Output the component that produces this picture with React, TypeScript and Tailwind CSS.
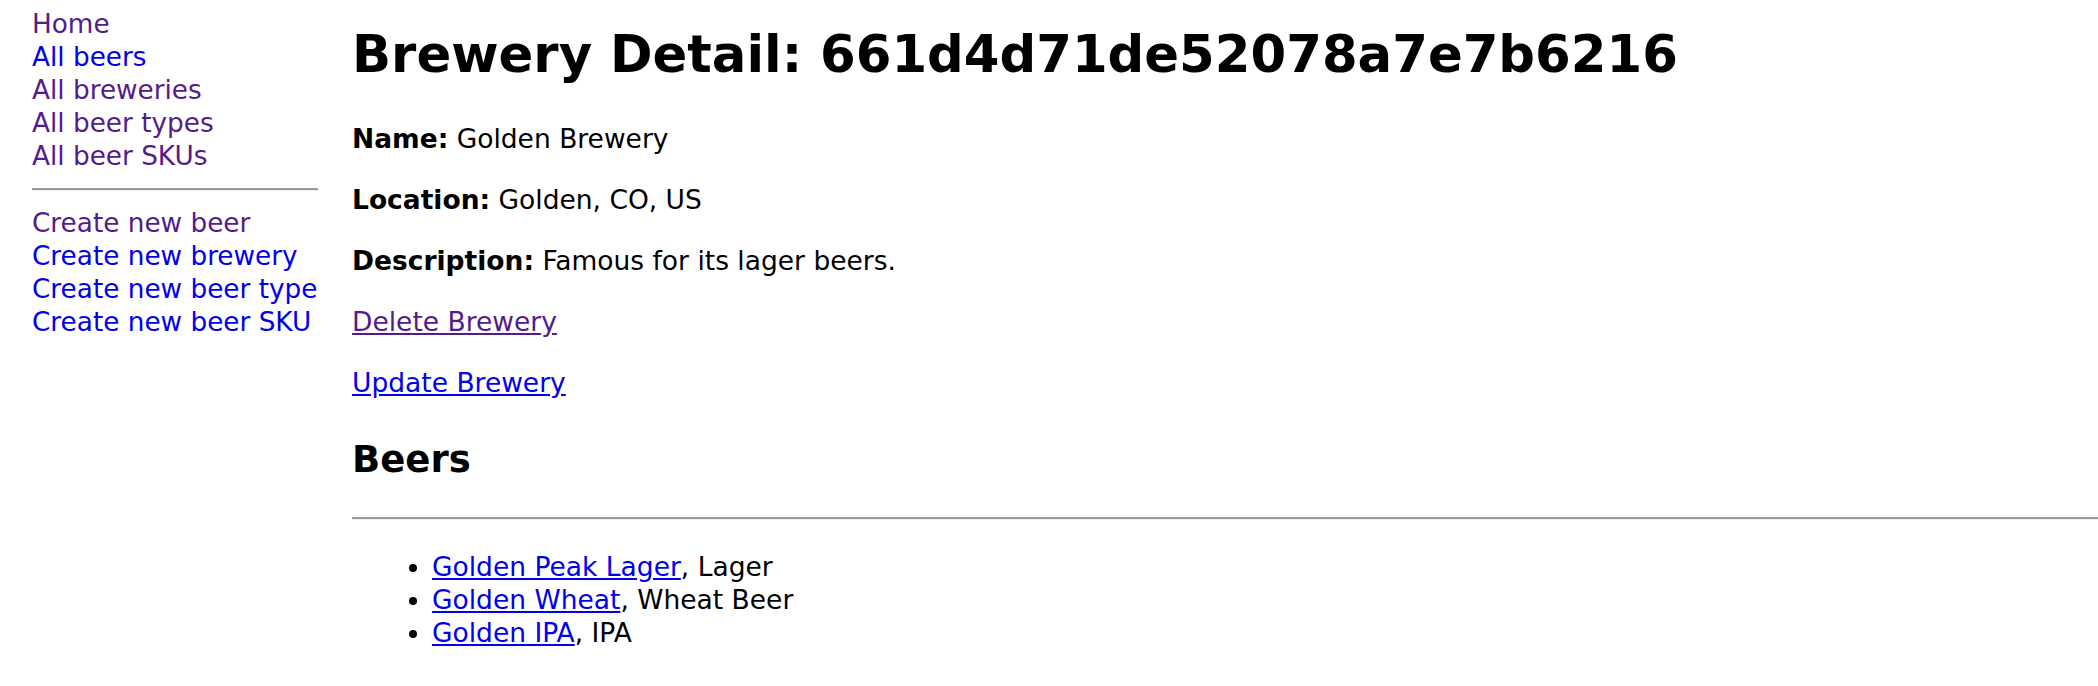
const navTop = [
  { label: 'Home', visited: true },
  { label: 'All beers', visited: false },
  { label: 'All breweries', visited: true },
  { label: 'All beer types', visited: true },
  { label: 'All beer SKUs', visited: true },
]

const navCreate = [
  { label: 'Create new beer', visited: true },
  { label: 'Create new brewery', visited: false },
  { label: 'Create new beer type', visited: false },
  { label: 'Create new beer SKU', visited: false },
]

const beers = [
  { name: 'Golden Peak Lager', type: 'Lager' },
  { name: 'Golden Wheat', type: 'Wheat Beer' },
  { name: 'Golden IPA', type: 'IPA' },
]

function NavLink({ label, visited }: { label: string; visited: boolean }) {
  return (
    <a
      href="#"
      className={
        visited
          ? 'block whitespace-nowrap text-[#551a8b]'
          : 'block whitespace-nowrap text-[#0000ee]'
      }
    >
      {label}
    </a>
  )
}

export default function App() {
  return (
    <div
      className="min-h-screen bg-white text-black text-[26.5px] leading-[33px] flex"
      style={{ fontFamily: '"DejaVu Sans", Verdana, sans-serif' }}
    >
      {/* sidebar */}
      <nav className="w-[318px] shrink-0 pl-[32px] pt-[8px] text-[26.3px]">
        {navTop.map((l) => (
          <NavLink key={l.label} {...l} />
        ))}
        <hr className="mt-[15px] mb-[16px] h-0 border-0 border-t-2 border-b border-t-[#999999] border-b-[#eeeeee]" />
        {navCreate.map((l) => (
          <NavLink key={l.label} {...l} />
        ))}
      </nav>

      {/* main */}
      <main className="flex-1 pl-[34px]">
        <h1 className="mt-[24px] text-[51.3px] leading-[60px] font-bold">
          Brewery Detail: 661d4d71de52078a7e7b6216
        </h1>

        <p className="mt-[38px]">
          <span className="font-bold">Name:</span> Golden Brewery
        </p>
        <p className="mt-[28px]">
          <span className="font-bold">Location:</span> Golden, CO, US
        </p>
        <p className="mt-[28px]">
          <span className="font-bold">Description:</span> Famous for its lager beers.
        </p>
        <p className="mt-[28px]">
          <a href="#" className="text-[#551a8b] underline">
            Delete Brewery
          </a>
        </p>
        <p className="mt-[28px]">
          <a href="#" className="text-[#0000ee] underline">
            Update Brewery
          </a>
        </p>

        <h2 className="mt-[38px] text-[37px] leading-[46px] font-bold">Beers</h2>
        <hr className="mt-[34px] h-0 border-0 border-t-2 border-b border-t-[#999999] border-b-[#eeeeee]" />

        <ul className="mt-[30px] pl-[80px] list-disc">
          {beers.map((b) => (
            <li key={b.name}>
              <a href="#" className="text-[#0000ee] underline">
                {b.name}
              </a>
              , {b.type}
            </li>
          ))}
        </ul>
      </main>
    </div>
  )
}
